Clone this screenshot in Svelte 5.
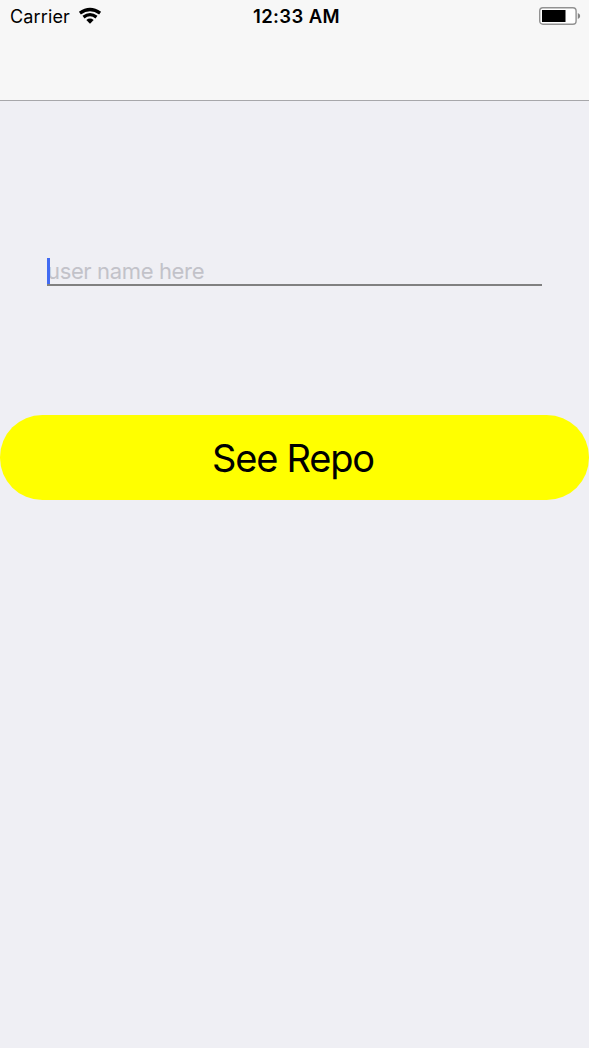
<script>
  let username = $state('');
</script>

<main>
  <header>
    <div class="status">
      <div class="network">
        <span class="carrier">Carrier</span>
        <svg class="wifi" width="24" height="18" viewBox="0 0 24 18" aria-hidden="true">
          <g fill="none" stroke="#000" stroke-width="3.3">
            <path d="M1.9 6.2 Q12 -1.2 22.1 6.2" />
            <path d="M5.5 10.1 Q12 5.2 18.5 10.1" />
          </g>
          <path d="M8.3 13 Q12 10.2 15.7 13 L12 16.8Z" />
        </svg>
      </div>
      <span class="time">12:33 AM</span>
      <svg class="battery" width="42" height="20" viewBox="0 0 42 20" aria-hidden="true">
        <rect x="0.7" y="1.7" width="36.4" height="16.6" rx="3.2" fill="#fff" stroke="#929292" stroke-width="1.4" />
        <rect x="3" y="4" width="23.5" height="12" fill="#000" />
        <path d="M38.8 7 Q41.2 8 41.2 10 Q41.2 12 38.8 13Z" fill="#858585" />
      </svg>
    </div>
  </header>
  <div class="field">
    <span class="caret"></span>
    <input aria-label="user name here" placeholder="user name here" bind:value={username} />
  </div>
  <button>See Repo</button>
</main>

<style>
  :global(body) { margin: 0; background: #efeff4; }
  main {
    display: flex;
    flex-direction: column;
    height: 1048px;
    background: #efeff4;
    font-family: Inter, sans-serif;
    overflow: hidden;
  }
  header {
    box-sizing: border-box;
    height: 101px;
    background: #f7f7f7;
    border-bottom: 1px solid #a7a7aa;
  }
  .status {
    display: grid;
    grid-template-columns: 1fr auto 1fr;
    align-items: center;
    height: 32px;
    padding: 0 8px 0 10px;
    color: #000;
    font-size: 18px;
  }
  .network { display: flex; align-items: center; gap: 8px; }
  .carrier { padding-top: 2px; line-height: 30px; letter-spacing: 0.15px; }
  .time { padding-left: 2px; line-height: 32px; font-size: 18.5px; font-weight: 600; letter-spacing: 0.4px; }
  .battery { justify-self: end; }
  .field {
    position: relative;
    height: 26px;
    margin: 157px 47px 0;
    border-bottom: 2px solid #808080;
  }
  .caret {
    position: absolute;
    left: 0;
    top: 0;
    width: 3px;
    height: 26px;
    background: #426bf2;
    z-index: 1;
  }
  input {
    display: block;
    width: 100%;
    height: 26px;
    box-sizing: border-box;
    padding: 0;
    border: 0;
    outline: 0;
    background: transparent;
    font: 22px Inter, sans-serif;
    letter-spacing: -0.36px;
  }
  input::placeholder { color: #c2c2c9; opacity: 1; }
  button {
    height: 84.5px;
    margin: 129px 0 0;
    padding: 2px 3px 0 0;
    border: 0;
    border-radius: 42.25px;
    background: #ff0;
    color: #000;
    font: 38px/82px Inter, sans-serif;
    letter-spacing: -1.2px;
  }
</style>
